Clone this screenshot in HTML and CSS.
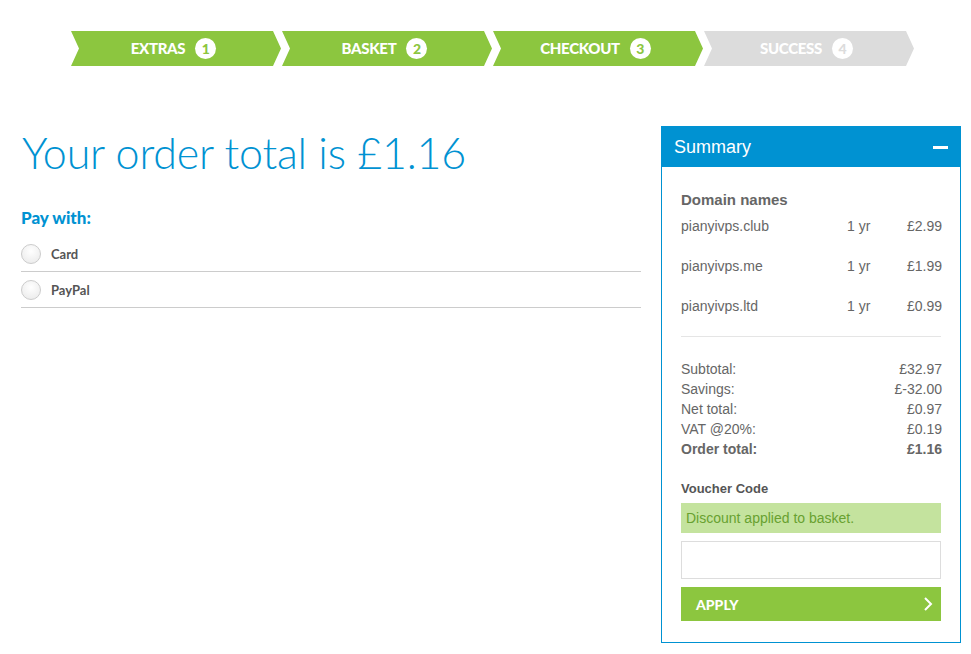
FILE: index.html
```html
<!doctype html>
<html>
<head>
    <meta charset="utf-8">
    <title>Checkout</title>
    <link rel="stylesheet" href="styles.css">
</head>
<body>
<ol class="steps">
	<li class="step done">EXTRAS <span class="num">1</span></li>
	<li class="step done">BASKET <span class="num">2</span></li>
	<li class="step done">CHECKOUT <span class="num">3</span></li>
	<li class="step">SUCCESS <span class="num">4</span></li>
</ol>
<div class="main">
	<div class="pay">
		<h1>Your order total is £1.16</h1>
		<h2>Pay with:</h2>
		<label class="opt"><span class="radio"></span>Card</label>
		<label class="opt"><span class="radio"></span>PayPal</label>
	</div>
	<div class="summary">
		<div class="head">Summary <span class="minus"></span></div>
		<div class="body">
			<h3>Domain names</h3>
			<div class="item"><span class="name">pianyivps.club</span><span class="yr">1 yr</span><span class="price">£2.99</span></div>
			<div class="item"><span class="name">pianyivps.me</span><span class="yr">1 yr</span><span class="price">£1.99</span></div>
			<div class="item"><span class="name">pianyivps.ltd</span><span class="yr">1 yr</span><span class="price">£0.99</span></div>
			<div class="totals">
				<div class="row"><span>Subtotal:</span><span>£32.97</span></div>
				<div class="row"><span>Savings:</span><span>£-32.00</span></div>
				<div class="row"><span>Net total:</span><span>£0.97</span></div>
				<div class="row"><span>VAT @20%:</span><span>£0.19</span></div>
				<div class="row total"><span>Order total:</span><span>£1.16</span></div>
			</div>
			<h4>Voucher Code</h4>
			<div class="ok">Discount applied to basket.</div>
			<input class="code" type="text">
			<button class="apply">APPLY
				<svg width="10" height="16" viewBox="0 0 10 16"><path d="M2 2l6 6-6 6" fill="none" stroke="#fff" stroke-width="2"/></svg>
			</button>
		</div>
	</div>
</div>
</body>
</html>
```

FILE: styles.css
```css
*{margin: 0;padding: 0;list-style: none;box-sizing: border-box;}
body{background: #fff;font-family: "Liberation Sans", Arial, sans-serif;}

.steps{display: flex;padding: 31px 0 0 71px;}
.step{
	width: 211px;height: 35px;background: #8cc63f;
	display: flex;align-items: center;justify-content: center;gap: 10px;
	color: #fff;font: 900 15px/1 Lato, sans-serif;letter-spacing: -0.3px;
	padding-right: 6px;
	clip-path: polygon(0 0, 202px 0, 210px 50%, 202px 100%, 0 100%, 8px 50%);
}
.step .num{
	width: 21px;height: 21px;border-radius: 50%;background: #fff;color: #8cc63f;
	display: flex;align-items: center;justify-content: center;font-size: 14px;letter-spacing: 0;
}
.step:not(.done){background: #dcdcdc;}
.step:not(.done) .num{color: #dcdcdc;}

.main{display: flex;gap: 20px;padding: 60px 0 0 21px;}
.pay{width: 620px;}
.pay h1{
	font: 300 43px/53px Lato, sans-serif;color: #0092d2;margin-left: 1px;
	letter-spacing: -0.2px;
}
.pay h2{font: 900 17px/20px Lato, sans-serif;color: #0092d2;margin-top: 29px;}
.opt{
	display: flex;align-items: center;height: 36px;border-bottom: 1px solid #ccc;
	font: 700 13px Lato, sans-serif;color: #555;
}
.opt:first-of-type{margin-top: 8px;}
.radio{
	width: 20px;height: 20px;border-radius: 50%;border: 1px solid #ccc;margin-right: 10px;
	background: radial-gradient(circle at 50% 35%, #fff, #e8e8e8);
}

.summary{width: 300px;border: 1px solid #0092d2;}
.summary .head{
	height: 40px;background: #0092d2;color: #fff;font-size: 18px;
	display: flex;align-items: center;justify-content: space-between;padding: 0 12px 0 12px;
}
.minus{width: 15px;height: 3px;background: #fff;}
.body{padding: 24px 19px 21px 19px;color: #666;font-size: 14px;}
.body h3{font-size: 15px;font-weight: bold;line-height: 18px;}
.item{display: flex;line-height: 16px;padding: 9px 0 15px;}
.item + .item{padding-top: 9px;}
.item .name{flex: 1;}
.item .yr{width: 70px;padding-left: 1px;}
.item .price{width: 26px;text-align: right;white-space: nowrap;direction: rtl;margin-right: -1px;}
.totals{border-top: 1px solid #e5e5e5;margin-top: 7px;padding-top: 22px;}
.row{display: flex;justify-content: space-between;line-height: 20px;margin-right: -1px;}
.row.total{font-weight: bold;}
.body h4{font-size: 13px;font-weight: bold;color: #555;margin-top: 22px;line-height: 16px;}
.ok{
	margin-top: 6px;height: 30px;background: #c4e39e;color: #68a130;
	padding: 0 5px;line-height: 30px;font-size: 14px;
}
.code{display: block;width: 100%;height: 38px;border: 1px solid #ddd;margin-top: 8px;}
.apply{
	display: flex;align-items: center;justify-content: space-between;
	width: 100%;height: 34px;margin-top: 8px;border: 0;background: #8cc63f;color: #fff;
	font: 900 14px Lato, sans-serif;padding: 0 8px 0 15px;
}
```
